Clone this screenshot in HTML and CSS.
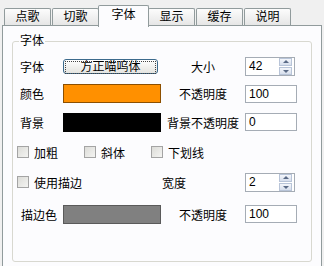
FILE: index.html
```html
<!DOCTYPE html>
<html>
<head>
    <meta charset="utf-8">
    <link rel="stylesheet" href="styles.css">
</head>
<body>
    <div class="window">
        <div class="tabs">
            <div class="tab">点歌</div>
            <div class="tab">切歌</div>
            <div class="tab active">字体</div>
            <div class="tab">显示</div>
            <div class="tab">缓存</div>
            <div class="tab">说明</div>
        </div>

        <div class="panel">
            <fieldset class="group">
                <legend>字体</legend>
                <div class="form">
                    <span class="label">字体</span>
                    <button class="font-button"><span>方正喵呜体</span></button>
                    <span class="label">大小</span>
                    <div class="spin">
                        <span class="spin-value">42</span>
                        <span class="spin-arrows">
                            <span class="arrow up"></span>
                            <span class="arrow down"></span>
                        </span>
                    </div>

                    <span class="label">颜色</span>
                    <span class="swatch orange"></span>
                    <span class="label">不透明度</span>
                    <span class="field">100</span>

                    <span class="label">背景</span>
                    <span class="swatch black"></span>
                    <span class="label">背景不透明度</span>
                    <span class="field">0</span>

                    <div class="checks">
                        <label class="check"><span class="box"></span>加粗</label>
                        <label class="check"><span class="box"></span>斜体</label>
                        <label class="check"><span class="box"></span>下划线</label>
                    </div>

                    <label class="check wide"><span class="box"></span>使用描边</label>
                    <span class="label">宽度</span>
                    <div class="spin">
                        <span class="spin-value">2</span>
                        <span class="spin-arrows">
                            <span class="arrow up"></span>
                            <span class="arrow down"></span>
                        </span>
                    </div>

                    <span class="label">描边色</span>
                    <span class="swatch gray"></span>
                    <span class="label">不透明度</span>
                    <span class="field">100</span>
                </div>
            </fieldset>
        </div>
    </div>
</body>
</html>
```

FILE: styles.css
```css
:root {
    --tab-border: #919b9c;
    --input-border: #a5acb5;
    --panel-bg: #fcfcfe;
    --group-border: #d8d8d0;
}

body {
    margin: 0;
    width: 324px;
    height: 266px;
    overflow: hidden;
    background: #f0f0f0;
    font-family: "Liberation Sans", "Noto Sans CJK SC", sans-serif;
    font-size: 12px;
    color: #000;
}

.window {
    display: flex;
    flex-direction: column;
    height: 100%;
}

/* tab strip */
.tabs {
    display: flex;
    gap: 1px;
    padding: 8px 0 0 4px;
    height: 17px;
    position: relative;
    z-index: 1;
}

.tab {
    width: 45px;
    height: 16px;
    line-height: 17px;
    text-align: center;
    border: 1px solid var(--tab-border);
    border-bottom: none;
    border-radius: 2px 2px 0 0;
    background: linear-gradient(#fcfcfc, #e6e6e6);
}

.tab.active {
    width: 49px;
    height: 21px;
    margin: -3px -2px 0;
    line-height: 19px;
    background: var(--panel-bg);
}

.panel {
    flex: 1;
    margin: 0 2px;
    padding: 8px 9px 0;
    background: var(--panel-bg);
    border: 1px solid var(--tab-border);
    border-bottom: none;
}

/* group box */
.group {
    margin: 0;
    padding: 4px 0 30px 2px;
    border: 1px solid var(--group-border);
    border-radius: 3px;
}

.group legend {
    margin-left: 4px;
    padding: 0 1px;
    line-height: 14px;
}

.form {
    display: grid;
    grid-template-columns: 48px 98px 84px 52px;
    grid-template-rows: 28px 27px 30px 30px 30px 34px;
    align-items: center;
}

.label {
    text-align: center;
    white-space: nowrap;
}

.form > .label:first-child,
.form > .label:nth-child(5),
.form > .label:nth-child(9) {
    text-align: left;
    padding-left: 5px;
}

.form > .label:nth-child(15) {
    text-align: left;
    padding-left: 1px;
}

.font-button {
    width: 95px;
    height: 15px;
    padding: 1px;
    border: 1px solid #3c6a8c;
    border-radius: 3px;
    background: linear-gradient(#ffffff, #e4e4e0);
    font: inherit;
    line-height: 11px;
    color: #000;
}

.font-button span {
    display: block;
    border: 1px dotted #444;
    height: 11px;
}

.swatch {
    height: 17px;
    border: 1px solid rgba(0, 0, 0, 0.45);
}

.swatch.orange { background: #ff9000; }
.swatch.black { background: #000; }
.swatch.gray { background: #808080; border-color: #5a5a5a; }

.field {
    height: 16px;
    line-height: 16px;
    padding-left: 3px;
    background: #fff;
    border: 1px solid var(--input-border);
}

.spin {
    display: flex;
    align-items: center;
    width: 48px;
    height: 17px;
    background: #fff;
    border: 1px solid var(--input-border);
}

.spin-value {
    flex: 1;
    padding-left: 3px;
}

.spin-arrows {
    display: flex;
    flex-direction: column;
    gap: 1px;
    margin-right: 2px;
}

.arrow {
    position: relative;
    width: 11px;
    height: 6px;
    border: 1px solid #b8c4d8;
    background: linear-gradient(#f4f6fb, #d6deec);
}

.arrow::after {
    content: '';
    position: absolute;
    left: 3px;
    border-left: 3px solid transparent;
    border-right: 3px solid transparent;
}

.arrow.up::after {
    top: 1px;
    border-bottom: 3px solid #5a6a86;
}

.arrow.down::after {
    top: 2px;
    border-top: 3px solid #5a6a86;
}

/* checkboxes */
.checks {
    grid-column: 1 / -1;
    display: flex;
    gap: 26px;
    padding-left: 2px;
}

.check {
    display: flex;
    align-items: center;
    gap: 5px;
    white-space: nowrap;
}

.check.wide {
    grid-column: 1 / 3;
    padding-left: 2px;
}

.box {
    width: 10px;
    height: 10px;
    border: 1px solid #a4a4a4;
    background: linear-gradient(135deg, #dcdcd8, #f4f4f2);
}
```
